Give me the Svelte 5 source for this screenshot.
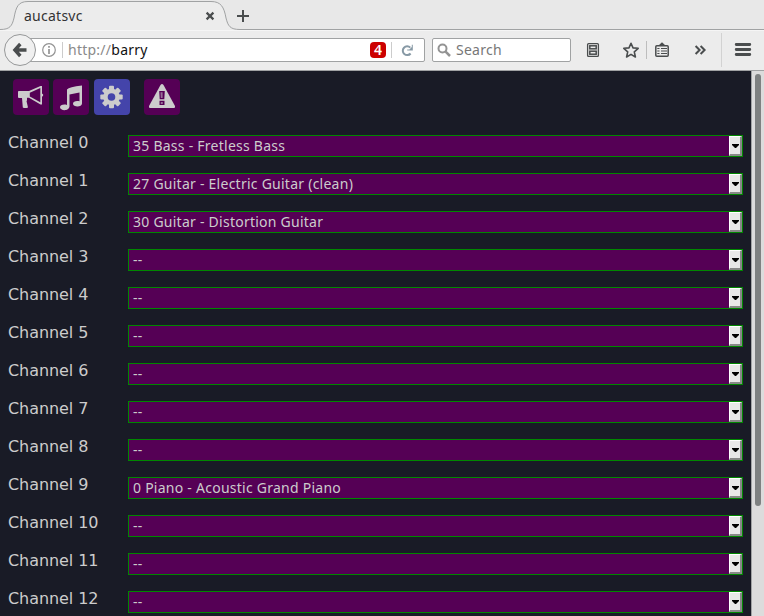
<script>
  const channels = [
    '35 Bass - Fretless Bass',
    '27 Guitar - Electric Guitar (clean)',
    '30 Guitar - Distortion Guitar',
    '--', '--', '--', '--', '--', '--',
    '0 Piano - Acoustic Grand Piano',
    '--', '--', '--'
  ];
</script>

<div class="browser">
  <div class="tabs">
    <svg class="curve" width="764" height="30" viewBox="0 0 764 30">
      <path d="M0 29.5C10 29.5 12 26 14 18C16 7 18 1.5 28 1.5H211C221 1.5 224 7 226 18C228 26 230 29.5 240 29.5V30H0Z" fill="#ececec" />
      <path d="M0 29.5C10 29.5 12 26 14 18C16 7 18 1.5 28 1.5H211C221 1.5 224 7 226 18C228 26 230 29.5 240 29.5H764" fill="none" stroke="#a0a2a3" />
    </svg>
    <span class="title">aucatsvc</span>
    <svg class="close" width="10" height="10" viewBox="0 0 10 10"><path d="M1.6 1.6L8.4 8.4M8.4 1.6L1.6 8.4" stroke="#4a4d4e" stroke-width="2.2" /></svg>
    <svg class="plus" width="12" height="12" viewBox="0 0 12 12"><path d="M6 0V12M0 6H12" stroke="#4a4d4e" stroke-width="2" /></svg>
  </div>

  <div class="toolbar">
    <div class="back">
      <svg width="16" height="16" viewBox="0 0 16 16"><path d="M8.3 2L2.9 8L8.3 14M3 8H14.500" fill="none" stroke="#4a4d4e" stroke-width="3.4" /></svg>
    </div>
    <div class="url">
      <svg class="info" width="14" height="14" viewBox="0 0 14 14"><circle cx="7" cy="7" r="6.3" fill="none" stroke="#939393" stroke-width="1.2" /><path d="M7 3V4.7M7 6V11" stroke="#858585" stroke-width="1.5" /></svg>
      <i class="sep"></i>
      <span class="address">http://<b>barry</b></span>
      <span class="count">4</span>
      <i class="sep"></i>
      <svg class="reload" width="13" height="13" viewBox="0 0 13 13"><path d="M9.6 9.5A4.4 4.4 0 1 1 9.3 3.6" fill="none" stroke="#8799a5" stroke-width="2" /><path d="M11.8 .8V6.5H6.2V5.4H8.4L10.8 3V.8Z" fill="#8799a5" /></svg>
    </div>
    <div class="search">
      <svg width="15" height="15" viewBox="0 0 15 15"><circle cx="5.5" cy="5.5" r="4" fill="none" stroke="#939393" stroke-width="2" /><path d="M8.6 8.6L13 13" stroke="#939393" stroke-width="2.5" /></svg>
      <span>Search</span>
    </div>
    <svg class="icons" width="190" height="39" viewBox="574 31 190 39">
      <g fill="none" stroke="#4a4d4e">
        <rect x="587.6" y="43.6" width="10.8" height="12.8" rx="1" stroke-width="1.3" />
        <rect x="589.8" y="45.8" width="6.4" height="3" stroke-width="1.5" />
        <rect x="589.8" y="51.2" width="6.4" height="3" stroke-width="1.5" />
        <path d="M631 43.3L633 47.9L638.2 48.3L634.3 51.8L635.4 57L631 54.4L626.6 57L627.7 51.8L623.8 48.3L629 47.9Z" stroke-width="1.6" stroke-linejoin="round" />
        <rect x="655.8" y="45.7" width="12.4" height="10.5" rx="1" stroke-width="1.5" />
        <path d="M661 48.5H667M661 51H667M661 53.5H667" stroke-width="1.1" />
        <path d="M657.3 48.5H659.5M657.3 51H659.5M657.3 53.5H659.5" stroke-width="1.2" />
        <path d="M695.6 46L699.6 50L695.6 54M700.6 46L704.6 50L700.6 54" stroke-width="2" />
        <path d="M736.2 44.5H749.8M736.2 49.5H749.8M736.2 54.5H749.8" stroke-width="2.8" stroke-linecap="round" />
      </g>
      <path d="M658 46L662 42.2L666 46Z" fill="#4a4d4e" />
      <path d="M646.5 41V59" stroke="#bdbdbd" />
      <path d="M721.5 33V67" stroke="#d2d2d2" />
    </svg>
  </div>

  <div class="viewport">
    <main>
      <nav>
        <button aria-label="Announcements">
          <svg viewBox="0 0 36 36"><path d="M5 12.500Q5 12 6 12H16L27.500 7H29V14.500Q31.500 16 29 17.800V25.500H27.500L16 18.800H14V21.500L13.500 22L15 28.500Q12 29.500 9.800 28.500L9 19H6Q5 19 5 18Z" fill="#ccc" /><path d="M16.800 13.700L27.300 9V23.300L16.800 17.400Z" fill="#505" /></svg>
        </button>
        <button aria-label="Music">
          <svg viewBox="0 0 36 36"><path d="M14 10.5Q16 8 29 6.5V24.5C29 28.4 20 28.2 20 24.7C20 22.3 23.5 21.3 26.5 22.3V13.5L16.5 15.5V27C16.5 32.6 7 32 7 28.3C7 26 10.5 25 14 26Z" fill="#ccc" /></svg>
        </button>
        <button class="active" aria-label="Settings">
          <svg viewBox="0 0 36 36">
            <g fill="#ccc" transform="translate(-.5 0)">
              {#each [0, 45, 90, 135] as angle}
                <rect x="15.500" y="6.8" width="5" height="22.4" rx="1" transform="rotate({angle} 18 18)" />
              {/each}
              <circle cx="18" cy="18" r="8.3" />
            </g>
            <circle cx="17.500" cy="18" r="3.800" fill="#44a" />
          </svg>
        </button>
        <button class="alert" aria-label="Warnings">
          <svg viewBox="0 0 36 36"><path d="M16.500 6Q18 4 19.500 6L31 27Q31.500 29 30 29H6Q4.500 29 5 27Z" fill="#ccc" /><path d="M15.200 12H20.800L20.300 20.300H15.700ZM15.500 21.800H20.500V26H15.500Z" fill="#505" /><path d="M16.500 13.300H18.600V19H16.800ZM16.800 23H18.800V25H16.800Z" fill="#ccc" opacity=".55" /></svg>
        </button>
      </nav>
      {#each channels as instrument, n}
        <div class="row">
          <span class="label">Channel {n}</span>
          <div class="select">
            <span>{instrument}</span>
            <div class="drop"><svg width="7" height="4" viewBox="0 0 7 4"><path d="M0 0H7V1L4 4H3L0 1Z" /></svg></div>
          </div>
        </div>
      {/each}
    </main>
    <div class="scroll"><div class="thumb"></div></div>
  </div>
</div>

<style>
  :global(body) { margin: 0; overflow: hidden; }
  .browser { width: 764px; height: 616px; overflow: hidden; display: flex; flex-direction: column; font: 14px/20px "Noto Sans", sans-serif; letter-spacing: .25px; background: #ececec; }
  svg { display: block; flex: none; }
  .tabs { position: relative; height: 30px; flex: none; display: flex; align-items: center; background: #e8e8e8; color: #333; }
  .curve { position: absolute; left: 0; top: 0; }
  .title, .close, .plus { position: relative; }
  .title { margin-left: 24px; width: 181px; margin-top: 1px; }
  .close { margin-top: 2px; }
  .plus { margin: 2px 0 0 22px; }
  .toolbar { height: 40px; flex: none; box-sizing: border-box; border-top: 1px solid #f5f5f5; padding-bottom: 1px; display: flex; align-items: center; }
  .back { position: relative; z-index: 1; box-sizing: border-box; width: 32px; height: 32px; margin-left: 4px; border: 1px solid #969899; border-radius: 50%; background: #f0f0f0; display: flex; align-items: center; justify-content: center; }
  .url, .search { box-sizing: border-box; height: 24px; background: #fff; border: 1px solid #a0a2a3; border-radius: 2px; display: flex; align-items: center; }
  .url { width: 407px; margin-left: -18px; padding-left: 23px; }
  .sep { width: 1px; height: 16px; background: #ccc; }
  .info { margin-right: 6px; }
  .address { margin-left: 5px; width: 302px; color: #8a8a8a; }
  .address b { font-weight: 400; color: #111; }
  .count { width: 16px; height: 16px; border-radius: 4px; background: #c00; color: #fff; font: 600 14px/16px "Noto Sans", sans-serif; letter-spacing: 0; text-align: center; margin-right: 5px; }
  .reload { margin-left: 9px; }
  .search { width: 139px; margin-left: 7px; padding-left: 4px; color: #777; }
  .search span { margin-left: 4px; }
  .icons { margin-left: 3px; align-self: flex-start; }
  .viewport { height: 546px; box-sizing: border-box; border-top: 1px solid #a0a2a3; display: flex; overflow: hidden; }
  main { width: 751px; flex: none; background: #191b26; color: #ccc; }
  nav { height: 56px; padding: 8px 0 0 13px; display: flex; box-sizing: border-box; gap: 4px; }
  nav button { width: 36px; height: 36px; padding: 0; border: 0; border-radius: 4px; background: #505; }
  nav .active { background: #44a; margin-left: 1px; }
  nav .alert { margin-left: 10px; }
  .row { height: 38px; padding-left: 8px; display: flex; align-items: flex-start; }
  .label { width: 120px; padding-top: 6px; font: 16px/20px "DejaVu Sans", sans-serif; letter-spacing: -.08px; }
  .select { box-sizing: border-box; width: 615px; height: 22px; margin-top: 8px; padding-left: 4px; border: 1px solid #080; background: #505; display: flex; align-items: center; justify-content: space-between; }
  .drop { box-sizing: border-box; width: 13px; height: 20px; border: 1px solid; border-color: #fff #888 #888 #fff; border-right-width: 2px; border-bottom-width: 2px; background: #e8e8e8; display: flex; align-items: center; padding-left: 2px; }
  .scroll { box-sizing: border-box; width: 13px; border-left: 1px solid #a0a2a3; background: #dcdcdc; padding: 3px 0 0 3px; }
  .thumb { width: 6px; height: 432px; border-radius: 3px; background: #7e8181; }
</style>
